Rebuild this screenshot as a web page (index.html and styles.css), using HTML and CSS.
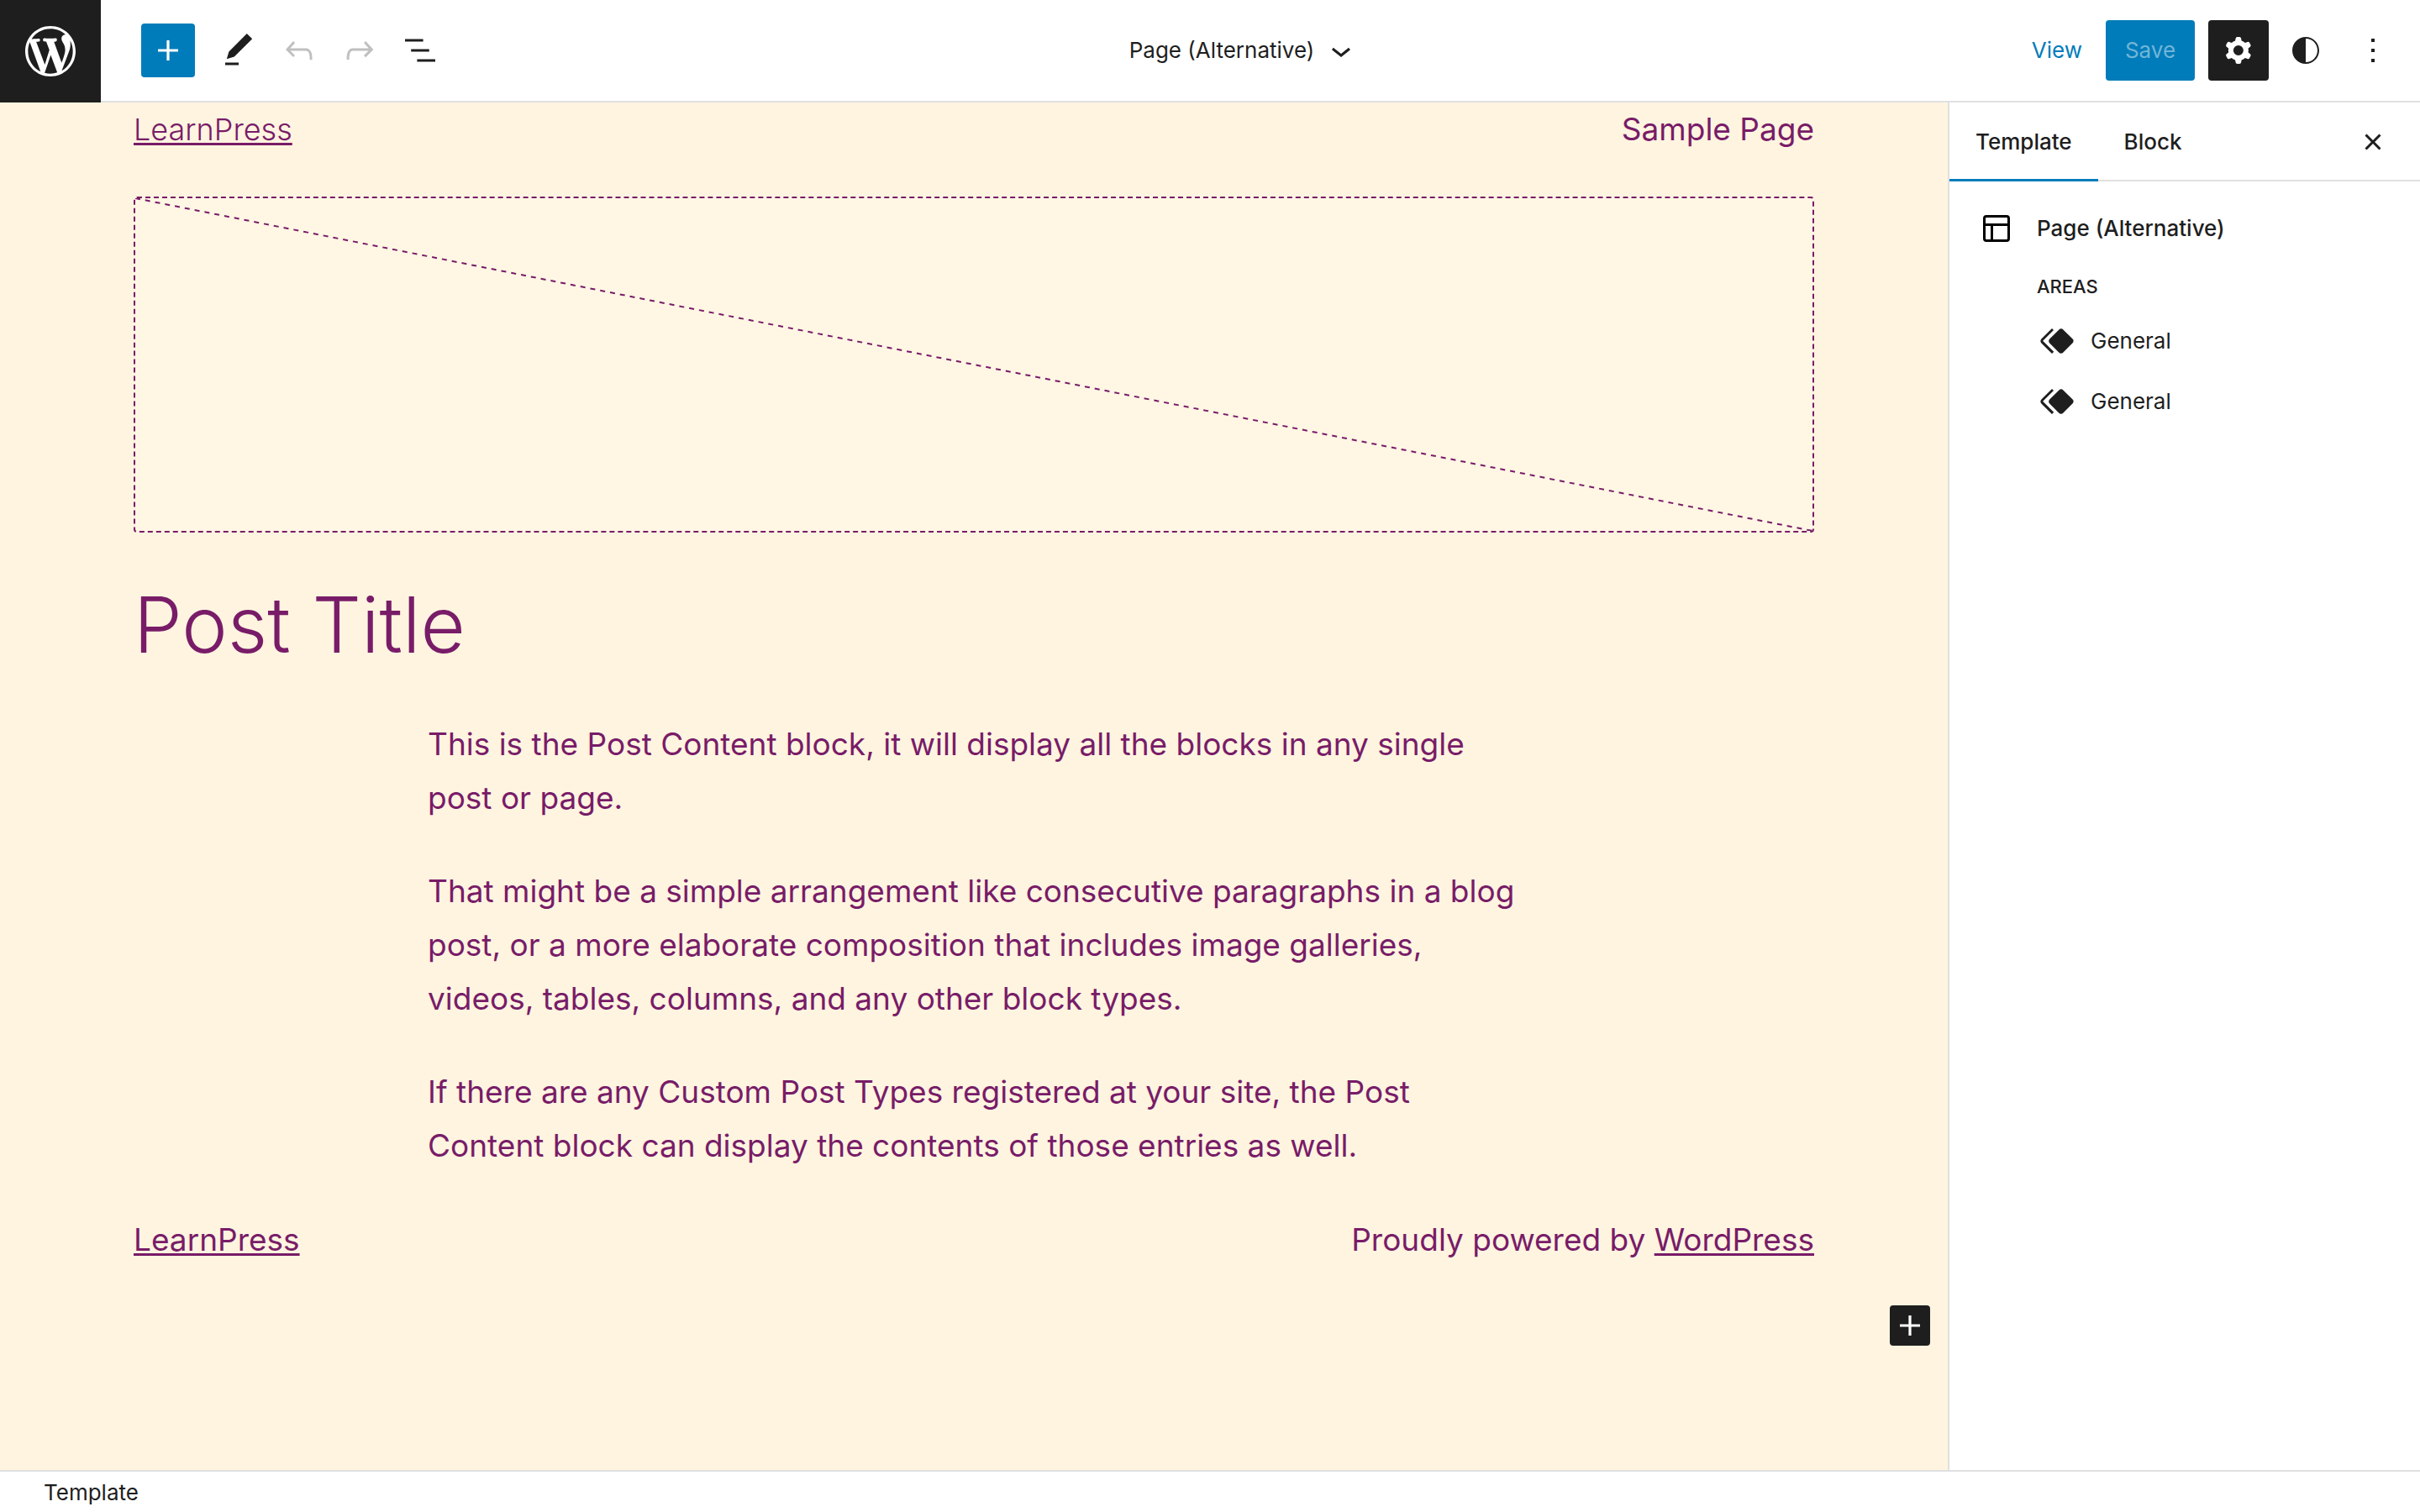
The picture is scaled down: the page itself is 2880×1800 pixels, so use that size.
FILE: index.html
```html
<!DOCTYPE html>
<html lang="en">
<head>
<meta charset="utf-8">
<meta name="viewport" content="width=device-width, initial-scale=1">
<title>Page (Alternative) – Template editor</title>
<link rel="stylesheet" href="styles.css">
</head>
<body>
<div class="editor">
  <header class="topbar">
    <a class="site-hub" href="#" aria-label="Dashboard">
      <svg class="wp-logo" viewBox="0 0 20 20"><path d="M20 10c0-5.51-4.49-10-10-10C4.48 0 0 4.49 0 10c0 5.52 4.48 10 10 10 5.51 0 10-4.48 10-10zM7.78 15.37L4.37 6.22c.55-.02 1.17-.08 1.17-.08.5-.06.44-1.13-.06-1.11 0 0-1.45.11-2.37.11-.18 0-.37 0-.58-.01C4.12 2.69 6.87 1.11 10 1.11c2.33 0 4.45.87 6.05 2.34-.68-.11-1.65.39-1.65 1.58 0 .74.45 1.36.9 2.1.35.61.55 1.36.55 2.46 0 1.49-1.4 5-1.4 5l-3.03-8.37c.54-.02.82-.17.82-.17.5-.05.44-1.25-.06-1.22 0 0-1.44.12-2.38.12-.87 0-2.33-.12-2.33-.12-.5-.03-.56 1.2-.06 1.22l.92.08 1.26 3.41zM17.41 10c.24-.64.74-1.87.43-4.25.7 1.29 1.05 2.71 1.05 4.25 0 3.29-1.73 6.24-4.4 7.78.97-2.59 1.94-5.2 2.92-7.78zM6.1 18.09C3.12 16.65 1.11 13.53 1.11 10c0-1.3.23-2.48.72-3.59C3.25 10.3 4.67 14.2 6.1 18.09zm4.03-6.63l2.58 6.98c-.86.29-1.76.45-2.71.45-.79 0-1.57-.11-2.29-.33.81-2.38 1.62-4.74 2.42-7.1z"/></svg>
    </a>
    <div class="toolbar">
      <div class="tools">
        <button class="inserter" type="button" aria-label="Toggle block inserter"><svg class="icon" viewBox="0 0 24 24"><path d="M18 11.2h-5.2V6h-1.6v5.2H6v1.6h5.2V18h1.6v-5.2H18z"/></svg></button>
        <button class="icon-button" type="button" aria-label="Tools"><svg class="icon" viewBox="0 0 24 24"><path d="M20.1 5.1L16.9 2 6.2 12.7l-1.3 4.4 4.5-1.3L20.1 5.1zM4 20.8h8v-1.5H4v1.5z"/></svg></button>
        <button class="icon-button" type="button" aria-label="Undo" disabled><svg class="icon" viewBox="0 0 24 24"><path d="M18.3 11.7c-.6-.6-1.4-.9-2.3-.9H6.7l2.9-3.3-1.1-1-4.5 5L8.5 16l1-1-2.7-2.7H16c.5 0 .9.2 1.3.5 1 1 1 3.4 1 4.5v.3h1.5v-.2c0-1.5 0-4.3-1.5-5.7z"/></svg></button>
        <button class="icon-button" type="button" aria-label="Redo" disabled><svg class="icon" viewBox="0 0 24 24"><path d="M15.6 6.5l-1.1 1 2.9 3.3H8c-.9 0-1.7.3-2.3.9-1.4 1.5-1.4 4.2-1.4 5.6v.2h1.5v-.3c0-1.1 0-3.5 1-4.5.3-.3.7-.5 1.3-.5h9.2L14.5 15l1.1 1.1 4.6-4.6-4.6-5z"/></svg></button>
        <button class="icon-button" type="button" aria-label="List view"><svg class="icon" viewBox="0 0 24 24"><path d="M13.8 5.2H3v1.5h10.8V5.2zm-3.6 12v1.5H21v-1.5H10.2zm7.2-6H6.6v1.5h10.8v-1.5z"/></svg></button>
      </div>
      <button class="document-title" type="button" aria-haspopup="true">
        <span>Page (Alternative)</span>
        <svg class="icon" viewBox="0 0 24 24"><path d="M17.5 11.6L12 16l-5.5-4.4.9-1.2L12 14l4.5-3.6 1 1.2z"/></svg>
      </button>
      <div class="actions">
        <a class="view-link" href="#">View</a>
        <button class="save" type="button" disabled>Save</button>
        <div class="panel-toggles">
          <button class="icon-button is-pressed" type="button" aria-label="Settings" aria-pressed="true"><svg class="icon" viewBox="0 0 24 24"><path fill-rule="evenodd" d="M10.289 4.836A1 1 0 0111.275 4h1.306a1 1 0 01.987.836l.244 1.466c.787.26 1.503.679 2.108 1.218l1.393-.522a1 1 0 011.216.437l.653 1.13a1 1 0 01-.23 1.273l-1.148.944a6.025 6.025 0 010 2.435l1.149.946a1 1 0 01.23 1.272l-.653 1.13a1 1 0 01-1.216.437l-1.394-.522c-.605.54-1.32.958-2.108 1.218l-.244 1.466a1 1 0 01-.987.836h-1.306a1 1 0 01-.986-.836l-.244-1.466a5.995 5.995 0 01-2.108-1.218l-1.394.522a1 1 0 01-1.217-.436l-.653-1.131a1 1 0 01.23-1.272l1.149-.946a6.026 6.026 0 010-2.435l-1.148-.944a1 1 0 01-.23-1.272l.653-1.131a1 1 0 011.217-.437l1.393.522a5.994 5.994 0 012.108-1.218l.244-1.466zM14.929 12a3 3 0 11-6 0 3 3 0 016 0z"/></svg></button>
          <button class="icon-button" type="button" aria-label="Styles"><svg class="icon" viewBox="0 0 24 24"><path d="M12 4c-4.4 0-8 3.6-8 8s3.6 8 8 8 8-3.6 8-8-3.6-8-8-8zm0 15V5c3.9 0 7 3.1 7 7s-3.1 7-7 7z"/></svg></button>
          <button class="icon-button" type="button" aria-label="Options"><svg class="icon" viewBox="0 0 24 24"><path d="M13 19h-2v-2h2v2zm0-6h-2v-2h2v2zm0-6h-2V5h2v2z"/></svg></button>
        </div>
      </div>
    </div>
  </header>

  <div class="workspace">
    <main class="canvas">
      <div class="page">
        <div class="site-row">
          <a class="site-title" href="#">LearnPress</a>
          <span>Sample Page</span>
        </div>
        <div class="featured-image">
          <svg class="placeholder-line" aria-hidden="true"><line x1="0" y1="0" x2="100%" y2="100%"/></svg>
        </div>
        <h1 class="post-title">Post Title</h1>
        <div class="post-content">
          <p>This is the Post Content block, it will display all the blocks in any single post or page.</p>
          <p>That might be a simple arrangement like consecutive paragraphs in a blog post, or a more elaborate composition that includes image galleries, videos, tables, columns, and any other block types.</p>
          <p>If there are any Custom Post Types registered at your site, the Post Content block can display the contents of those entries as well.</p>
        </div>
        <footer class="site-row">
          <a href="#">LearnPress</a>
          <span>Proudly powered by <a href="#">WordPress</a></span>
        </footer>
      </div>
      <div class="appender-row">
        <button class="appender" type="button" aria-label="Add block"><svg class="icon" viewBox="0 0 24 24"><path d="M18 11.2h-5.2V6h-1.6v5.2H6v1.6h5.2V18h1.6v-5.2H18z"/></svg></button>
      </div>
    </main>

    <aside class="sidebar">
      <div class="tabs">
        <button class="tab is-active" type="button">Template</button>
        <button class="tab" type="button">Block</button>
        <button class="icon-button close" type="button" aria-label="Close settings"><svg class="icon" viewBox="0 0 24 24"><path d="M12 13.06l3.712 3.713 1.061-1.06L13.061 12l3.712-3.712-1.06-1.06L12 10.938 8.288 7.227l-1.061 1.06L10.939 12l-3.712 3.712 1.06 1.061L12 13.061z"/></svg></button>
      </div>
      <section class="template-card">
        <svg class="icon card-icon" viewBox="0 0 24 24"><path d="M18 5.5H6a.5.5 0 00-.5.5v3h13V6a.5.5 0 00-.5-.5zm.5 5H10v8h8a.5.5 0 00.5-.5v-7.5zm-10 0h-3V18a.5.5 0 00.5.5h2.5v-8zM6 4h12a2 2 0 012 2v12a2 2 0 01-2 2H6a2 2 0 01-2-2V6a2 2 0 012-2z"/></svg>
        <div class="card-body">
          <h2 class="card-title">Page (Alternative)</h2>
          <h3 class="areas-title">Areas</h3>
          <ul class="areas">
            <li><button class="area" type="button"><svg class="icon" viewBox="0 0 24 24"><path d="M21.3 10.8l-5.6-5.6c-.7-.7-1.8-.7-2.5 0l-5.6 5.6c-.7.7-.7 1.8 0 2.5l5.6 5.6c.3.3.8.5 1.2.5s.9-.2 1.2-.5l5.6-5.6c.8-.7.8-1.9.1-2.5zm-17.6 1L10 5.5l-1-1-6.3 6.3c-.7.7-.7 1.8 0 2.5L9 19.5l1.1-1.1-6.3-6.3c-.2 0-.2-.2-.1-.3z"/></svg>General</button></li>
            <li><button class="area" type="button"><svg class="icon" viewBox="0 0 24 24"><path d="M21.3 10.8l-5.6-5.6c-.7-.7-1.8-.7-2.5 0l-5.6 5.6c-.7.7-.7 1.8 0 2.5l5.6 5.6c.3.3.8.5 1.2.5s.9-.2 1.2-.5l5.6-5.6c.8-.7.8-1.9.1-2.5zm-17.6 1L10 5.5l-1-1-6.3 6.3c-.7.7-.7 1.8 0 2.5L9 19.5l1.1-1.1-6.3-6.3c-.2 0-.2-.2-.1-.3z"/></svg>General</button></li>
          </ul>
        </div>
      </section>
    </aside>
  </div>

  <nav class="breadcrumb" aria-label="Block breadcrumb">Template</nav>
</div>
</body>
</html>
```
FILE: styles.css
```css
:root {
  --ink: #1e1e1e;
  --accent: #007cba;
  --line: #e0e0e0;
  --plum: #781c68;
  --cream: #fff4e0;
}

*,
*::before,
*::after {
  box-sizing: border-box;
}

body {
  margin: 0;
  color: var(--ink);
  background: #fff;
  font-family: Inter, "Liberation Sans", sans-serif;
  font-size: 26px;
  line-height: 36px;
}

button {
  margin: 0;
  padding: 0;
  border: 0;
  background: none;
  color: inherit;
  font: inherit;
  cursor: pointer;
}

h1,
h2,
h3,
p,
ul {
  margin: 0;
  padding: 0;
}

.icon {
  display: block;
  flex: none;
  width: 48px;
  height: 48px;
  fill: currentColor;
}

.editor {
  display: flex;
  flex-direction: column;
  min-height: 100vh;
}

/* Top bar */

.topbar {
  display: flex;
}

.site-hub {
  display: flex;
  align-items: center;
  justify-content: center;
  width: 120px;
  height: 122px;
  background: var(--ink);
  color: #fff;
}

.wp-logo {
  width: 60px;
  height: 60px;
  fill: currentColor;
}

.toolbar {
  flex: 1;
  display: grid;
  grid-template-columns: 1fr auto 1fr;
  align-items: center;
  padding: 0 20px 0 48px;
  border-bottom: 2px solid var(--line);
}

.tools,
.actions,
.panel-toggles {
  display: flex;
  align-items: center;
}

.inserter {
  display: flex;
  align-items: center;
  justify-content: center;
  width: 64px;
  height: 64px;
  margin-right: 16px;
  border-radius: 4px;
  background: var(--accent);
  color: #fff;
}

.icon-button {
  display: flex;
  align-items: center;
  justify-content: center;
  width: 72px;
  height: 72px;
  border-radius: 4px;
}

.icon-button:disabled {
  color: #c0c0c0;
}

.icon-button.is-pressed {
  background: var(--ink);
  color: #fff;
}

.document-title {
  display: flex;
  align-items: center;
  gap: 8px;
  margin-right: 64px;
}

.actions {
  justify-content: flex-end;
}

.view-link {
  margin-right: 28px;
  color: var(--accent);
  text-decoration: none;
}

.save {
  width: 106px;
  height: 72px;
  margin-right: 16px;
  border-radius: 4px;
  background: var(--accent);
  color: #72b5d8;
}

.panel-toggles {
  gap: 8px;
}

/* Canvas */

.workspace {
  flex: 1;
  display: flex;
}

.canvas {
  flex: 1;
  min-width: 0;
  background: var(--cream);
  color: var(--plum);
  font-size: 37px;
  line-height: 64px;
}

.canvas a {
  color: inherit;
  text-decoration-thickness: 3px;
  text-underline-offset: 3px;
  text-decoration-skip-ink: none;
}

.page {
  display: flex;
  flex-direction: column;
  gap: 48px;
  max-width: 2000px;
  margin: 0 auto;
}

.site-row {
  display: flex;
  justify-content: space-between;
}

.site-title {
  font-size: 36px;
  font-weight: 300;
}

.featured-image {
  height: 400px;
  border: 2px dashed var(--plum);
  border-radius: 4px;
  background: #fff6e4;
}

.placeholder-line {
  display: block;
  width: 100%;
  height: 100%;
  stroke: var(--plum);
  stroke-width: 2;
  stroke-dasharray: 6 6;
}

.post-title {
  font-size: 92px;
  font-weight: 300;
  line-height: 124px;
}

.post-content {
  display: flex;
  flex-direction: column;
  gap: 47px;
  width: 100%;
  max-width: 1300px;
  margin: 0 auto;
}

.appender-row {
  display: flex;
  justify-content: flex-end;
  padding: 46px 21px;
}

.appender {
  width: 48px;
  height: 48px;
  border-radius: 4px;
  background: var(--ink);
  color: #fff;
}

/* Settings sidebar */

.sidebar {
  flex: none;
  width: 562px;
  border-left: 2px solid var(--line);
}

.tabs {
  display: flex;
  align-items: center;
  height: 94px;
  padding-right: 20px;
  box-shadow: inset 0 -2px var(--line);
}

.tab {
  height: 94px;
  padding: 0 31px;
  font-weight: 500;
}

.tab.is-active {
  box-shadow: inset 0 -3px var(--accent);
}

.close {
  margin-left: auto;
}

.template-card {
  display: flex;
  gap: 24px;
  padding: 32px;
}

.card-icon {
  color: #000;
}

.card-title {
  font-size: 26px;
  font-weight: 500;
  line-height: 48px;
}

.areas-title {
  margin: 28px 0 12px;
  font-size: 22px;
  font-weight: 500;
  line-height: 34px;
  text-transform: uppercase;
}

.areas {
  list-style: none;
}

.area {
  display: flex;
  align-items: center;
  gap: 16px;
  height: 72px;
}

/* Footer */

.breadcrumb {
  height: 50px;
  padding: 0 52px;
  border-top: 2px solid var(--line);
  line-height: 50px;
}
```
